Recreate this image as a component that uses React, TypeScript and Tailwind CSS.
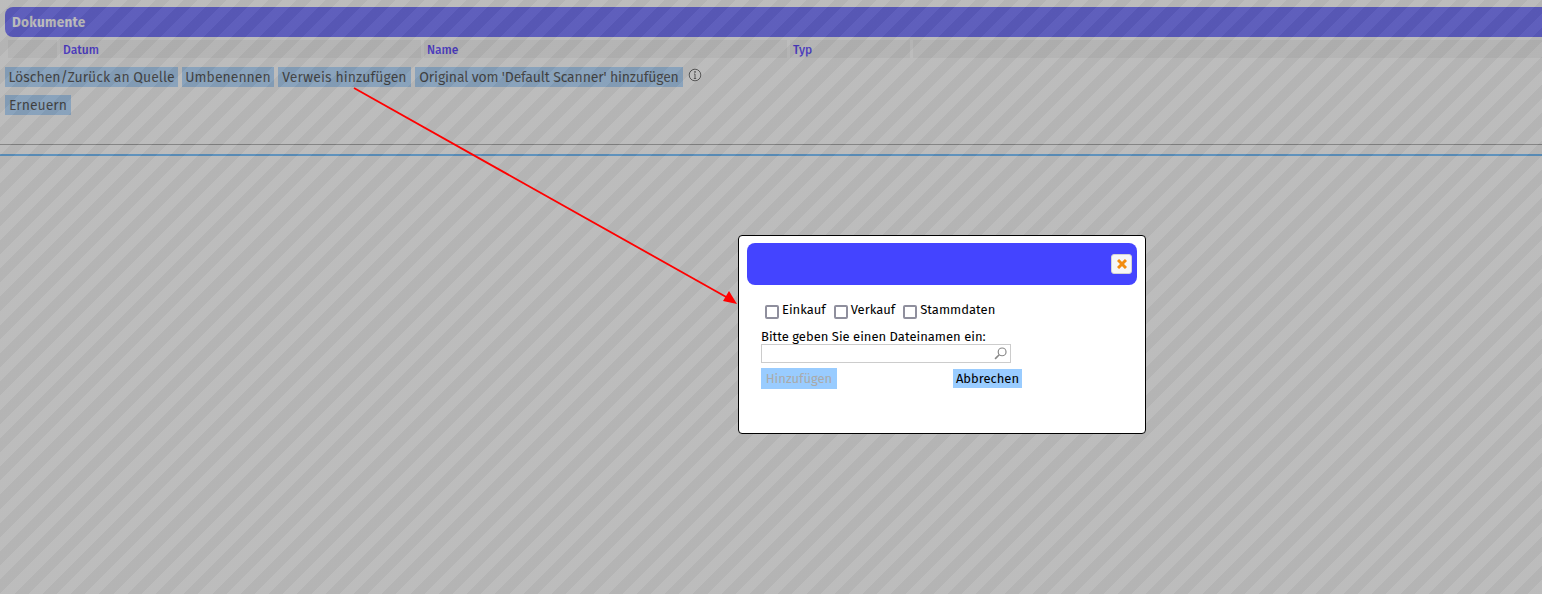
const font = "font-['Trebuchet_MS','Fira_Sans','Open_Sans','Noto_Sans',sans-serif]";

const columns = [
  { label: "", width: "w-[49px]" },
  { label: "Datum", width: "w-[361px]" },
  { label: "Name", width: "w-[363px]" },
  { label: "Typ", width: "w-[120px]" },
  { label: "", width: "flex-1" },
];

const actions = [
  { label: "Löschen/Zurück an Quelle", width: "w-[173px]" },
  { label: "Umbenennen", width: "w-[92px]" },
  { label: "Verweis hinzufügen", width: "w-[133px] tracking-[0.1px]" },
  { label: "Original vom 'Default Scanner' hinzufügen", width: "w-[268px] tracking-[-0.15px]" },
];

function ActionButton({ label, width }: { label: string; width: string }) {
  return (
    <button className={`${width} h-5 whitespace-nowrap bg-[#99ccff] text-center text-[14px] leading-[21px] text-[#111]`}>
      {label}
    </button>
  );
}

function CheckItem({ label }: { label: string }) {
  return (
    <label className="flex items-start gap-[3px]">
      <span className="mt-[2px] h-[14px] w-[14px] rounded-[2px] border-2 border-[#8f8f9d] bg-white" />
      <span className="text-[13px] leading-[14px]">{label}</span>
    </label>
  );
}

export default function App() {
  return (
    <div className={`relative h-[594px] w-full overflow-hidden bg-white ${font}`}>
      <div className="pl-[5px] pt-[7px]">
        <div className="flex h-[30px] items-center rounded-l-lg bg-[#4444ff] pl-[7px] pt-[3px] text-[13.5px] font-bold tracking-[0.3px] text-white">
          Dokumente
        </div>
        <div className="ml-[3px] mt-[3px] flex h-[18px] gap-[3px]">
          {columns.map((c, i) => (
            <div key={i} className={`${c.width} bg-[#f0f0f0] pl-[3px] text-[12px] font-medium leading-[20px] text-[#2200ff]`}>
              {c.label}
            </div>
          ))}
        </div>
        <div className="mt-[9px] flex items-start gap-1">
          {actions.map((a) => (
            <ActionButton key={a.label} label={a.label} width={a.width} />
          ))}
          <svg className="ml-[1px] mt-px h-[14px] w-[14px] text-[#333]" viewBox="0 0 14 14" fill="none" stroke="currentColor">
            <circle cx="7" cy="7" r="5.8" />
            <path d="M7 6v4.5M5.8 10.5h2.4M6 6h1" />
            <circle cx="7" cy="3.9" r="0.5" fill="currentColor" />
          </svg>
        </div>
        <div className="mt-2 flex">
          <ActionButton label="Erneuern" width="w-[66px]" />
        </div>
      </div>
      <div className="mt-[29px] h-px bg-[#909090]" />
      <div className="mt-[9px] h-[2px] bg-[#44aaff]" />

      {/* page dimming overlay */}
      <div className="absolute inset-0 bg-[repeating-linear-gradient(135deg,rgba(122,122,122,0.5)_0,rgba(122,122,122,0.5)_10px,rgba(106,106,106,0.5)_10px,rgba(106,106,106,0.5)_20px)]" />

      {/* annotation arrow */}
      <svg className="absolute left-0 top-0 h-[594px] w-[1542px]" viewBox="0 0 1542 594" fill="none">
        <path d="M354 88L728 298" stroke="#ff0000" strokeWidth="1.8" />
        <path d="M737 304L723 301L729 291Z" fill="#ff0000" />
      </svg>

      <div className="absolute left-[738px] top-[235px] h-[199px] w-[408px] rounded border border-black bg-white px-2 pt-[7px] text-black">
        <div className="flex h-[42px] items-center justify-end rounded-lg bg-[#4444ff] pr-[5px]">
          <button className="flex h-5 w-[21px] items-center justify-center rounded-[3px] border border-[#d3d3d3] bg-[#f6f6f6]">
            <svg className="h-[10px] w-[10px]" viewBox="0 0 10 10" stroke="#f28c0f" strokeWidth="3">
              <path d="M1 1L9 9M9 1L1 9" />
            </svg>
          </button>
        </div>
        <div className="ml-[18px] mt-[18px] flex gap-[8px]">
          <CheckItem label="Einkauf" />
          <CheckItem label="Verkauf" />
          <CheckItem label="Stammdaten" />
        </div>
        <div className="ml-[14px] mt-[11px]">
          <div className="text-[13px] leading-[14px]">Bitte geben Sie einen Dateinamen ein:</div>
          <div className="flex h-[19px] w-[250px] items-center justify-end border border-[#ccc] pr-[3px]">
            <svg className="h-[13px] w-[13px]" viewBox="0 0 12 12" fill="none" stroke="#888" strokeWidth="1.1">
              <circle cx="7.5" cy="4.5" r="3.6" />
              <path d="M4.8 7.2L1 11" strokeWidth="1.5" />
            </svg>
          </div>
          <div className="mt-[5px] flex items-center">
            <button className="h-[21px] w-[76px] bg-[#99ccff] text-[13px] text-[#aaa]">Hinzufügen</button>
            <button className="ml-[116px] h-[19px] w-[69px] bg-[#99ccff] text-[13px] text-black">Abbrechen</button>
          </div>
        </div>
      </div>
    </div>
  );
}
